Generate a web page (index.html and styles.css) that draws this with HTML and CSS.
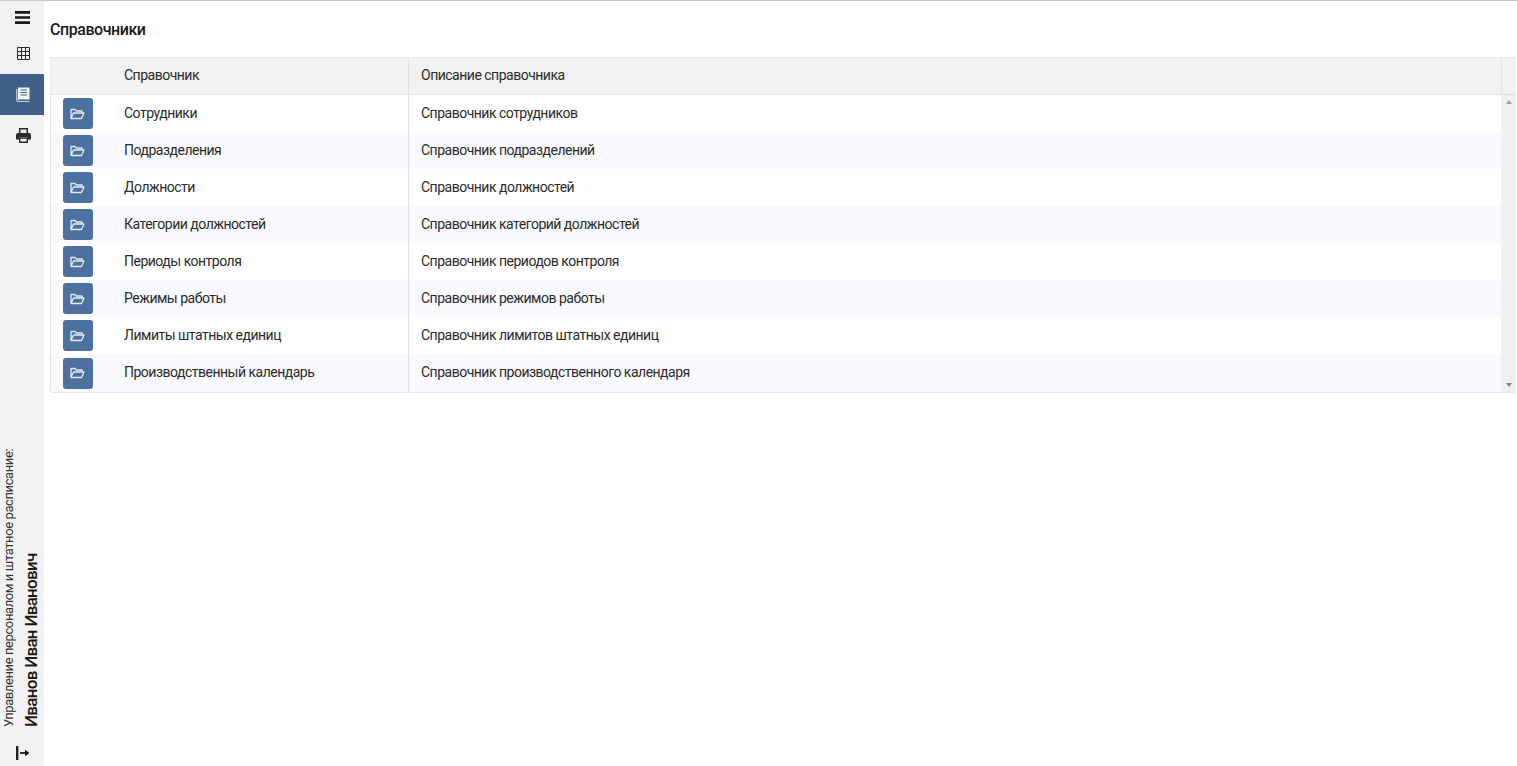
FILE: index.html
```html
<!DOCTYPE html>
<html lang="ru">
<head>
  <meta charset="UTF-8">
  <title>Справочники</title>
  <link rel="stylesheet" href="styles.css">
</head>
<body>
  <aside class="sidebar">
    <nav class="side-nav">
      <a class="side-item side-toggle" href="#">
        <svg class="icon-menu" viewBox="0 0 15 13"><path d="M0 1.350h15M0 6.500h15M0 11.650h15" stroke="currentColor" stroke-width="2.700" fill="none"/></svg>
      </a>
      <a class="side-item" href="#">
        <svg class="icon-table" viewBox="0 0 13 13"><path d="M.5.5h12v12H.5zM.5 4.500h12M.5 8.500h12M4.500.5v12M8.500.5v12" stroke="currentColor" stroke-width="1" fill="none"/></svg>
      </a>
      <a class="side-item active" href="#">
        <svg class="icon-book" viewBox="0 0 14 15"><path d="M2 .5h11.500v12H3.200C2.300 12.500 2 13 2 13.300z" fill="currentColor"/><path d="M.8 2v11c0 1 .6 1.500 1.500 1.500h11.200" stroke="#c4d3e4" stroke-width="1.200" fill="none"/><path d="M4.500 3h6.500M4.500 5.500h6.500M4.500 8h6.500" stroke="#3f6088" stroke-width="1.100"/></svg>
      </a>
      <a class="side-item" href="#">
        <svg class="icon-print" viewBox="0 0 15 15"><path d="M3.700 5V.8h7.600V5" stroke="currentColor" stroke-width="1.500" fill="none"/><path d="M2 5h11a2 2 0 0 1 2 2v4.500h-3V9H3v2.500H0V7a2 2 0 0 1 2-2z" fill="currentColor"/><path d="M3.700 10h7.600v4.300H3.700z" stroke="currentColor" stroke-width="1.400" fill="none"/></svg>
      </a>
    </nav>
    <div class="side-user">
      <span class="app-name">Управление персоналом и штатное расписание:</span>
      <span class="user-name">Иванов Иван Иванович</span>
    </div>
    <a class="side-logout" href="#">
      <svg class="icon-logout" viewBox="0 0 14 14"><path d="M1.200 0v14" stroke="currentColor" stroke-width="2.300"/><path d="M4 7h6" stroke="currentColor" stroke-width="1.800"/><path d="M9 3.800L13.500 7 9 10.200z" fill="currentColor"/></svg>
    </a>
  </aside>

  <main class="content">
    <h1 class="page-title">Справочники</h1>
    <div class="grid">
      <div class="grid-head">
        <div class="cell-action"></div>
        <div class="cell-name">Справочник</div>
        <div class="cell-desc">Описание справочника</div>
        <div class="head-scroll"></div>
      </div>
      <div class="grid-wrap">
        <div class="grid-body">
          <div class="grid-row">
            <div class="cell-action"><button class="open-btn"><svg class="folder" viewBox="0 0 15 12"><path d="M1 10.500V1.500h4l1.300 1.500H12v2M1 10.500h10.500L14 5H3.500z" stroke="currentColor" stroke-width="1.300" fill="none" stroke-linejoin="round"/></svg></button></div>
            <div class="cell-name">Сотрудники</div>
            <div class="cell-desc">Справочник сотрудников</div>
          </div>
          <div class="grid-row">
            <div class="cell-action"><button class="open-btn"><svg class="folder" viewBox="0 0 15 12"><path d="M1 10.500V1.500h4l1.300 1.500H12v2M1 10.500h10.500L14 5H3.500z" stroke="currentColor" stroke-width="1.300" fill="none" stroke-linejoin="round"/></svg></button></div>
            <div class="cell-name">Подразделения</div>
            <div class="cell-desc">Справочник подразделений</div>
          </div>
          <div class="grid-row">
            <div class="cell-action"><button class="open-btn"><svg class="folder" viewBox="0 0 15 12"><path d="M1 10.500V1.500h4l1.300 1.500H12v2M1 10.500h10.500L14 5H3.500z" stroke="currentColor" stroke-width="1.300" fill="none" stroke-linejoin="round"/></svg></button></div>
            <div class="cell-name">Должности</div>
            <div class="cell-desc">Справочник должностей</div>
          </div>
          <div class="grid-row">
            <div class="cell-action"><button class="open-btn"><svg class="folder" viewBox="0 0 15 12"><path d="M1 10.500V1.500h4l1.300 1.500H12v2M1 10.500h10.500L14 5H3.500z" stroke="currentColor" stroke-width="1.300" fill="none" stroke-linejoin="round"/></svg></button></div>
            <div class="cell-name">Категории должностей</div>
            <div class="cell-desc">Справочник категорий должностей</div>
          </div>
          <div class="grid-row">
            <div class="cell-action"><button class="open-btn"><svg class="folder" viewBox="0 0 15 12"><path d="M1 10.500V1.500h4l1.300 1.500H12v2M1 10.500h10.500L14 5H3.500z" stroke="currentColor" stroke-width="1.300" fill="none" stroke-linejoin="round"/></svg></button></div>
            <div class="cell-name">Периоды контроля</div>
            <div class="cell-desc">Справочник периодов контроля</div>
          </div>
          <div class="grid-row">
            <div class="cell-action"><button class="open-btn"><svg class="folder" viewBox="0 0 15 12"><path d="M1 10.500V1.500h4l1.300 1.500H12v2M1 10.500h10.500L14 5H3.500z" stroke="currentColor" stroke-width="1.300" fill="none" stroke-linejoin="round"/></svg></button></div>
            <div class="cell-name">Режимы работы</div>
            <div class="cell-desc">Справочник режимов работы</div>
          </div>
          <div class="grid-row">
            <div class="cell-action"><button class="open-btn"><svg class="folder" viewBox="0 0 15 12"><path d="M1 10.500V1.500h4l1.300 1.500H12v2M1 10.500h10.500L14 5H3.500z" stroke="currentColor" stroke-width="1.300" fill="none" stroke-linejoin="round"/></svg></button></div>
            <div class="cell-name">Лимиты штатных единиц</div>
            <div class="cell-desc">Справочник лимитов штатных единиц</div>
          </div>
          <div class="grid-row">
            <div class="cell-action"><button class="open-btn"><svg class="folder" viewBox="0 0 15 12"><path d="M1 10.500V1.500h4l1.300 1.500H12v2M1 10.500h10.500L14 5H3.500z" stroke="currentColor" stroke-width="1.300" fill="none" stroke-linejoin="round"/></svg></button></div>
            <div class="cell-name">Производственный календарь</div>
            <div class="cell-desc">Справочник производственного календаря</div>
          </div>
        </div>
        <div class="scroll-track">
          <span class="arrow-up"></span>
          <span class="arrow-down"></span>
        </div>
      </div>
    </div>
  </main>
</body>
</html>
```

FILE: styles.css
```css
* {
  margin: 0;
  padding: 0;
  box-sizing: border-box;
}

html, body {
  height: 100%;
  overflow: hidden;
}

body {
  font-family: Roboto, "Liberation Sans", sans-serif;
  font-size: 14px;
  letter-spacing: -0.5px;
  color: #2b2b2b;
  background-color: #ffffff;
  border-top: 1px solid #c8c8c8;
  display: flex;
}

.sidebar {
  width: 44px;
  flex-shrink: 0;
  background-color: #f2f2f2;
  display: flex;
  flex-direction: column;
}

.side-nav {
  display: flex;
  flex-direction: column;
}

.side-item {
  height: 41px;
  display: flex;
  align-items: center;
  justify-content: center;
  color: #2b2b2b;
  padding-left: 2px;
  padding-bottom: 1px;
}

.side-toggle {
  height: 32px;
  color: #1a1a1a;
  padding-left: 1px;
  padding-bottom: 0;
}

.side-item.active {
  background-color: #3f6088;
  color: #f2f5f8;
}

.icon-menu {
  width: 15px;
  height: 13px;
}

.icon-table {
  width: 13px;
  height: 13px;
}

.icon-book {
  width: 14px;
  height: 15px;
}

.icon-print {
  width: 15px;
  height: 15px;
}

/* подпись снизу вверх */
.side-user {
  flex: 1;
  display: flex;
  flex-direction: column;
  justify-content: flex-start;
  align-items: flex-start;
  writing-mode: vertical-rl;
  transform: rotate(180deg);
  padding-top: 11px;
}

.app-name {
  font-size: 13px;
  letter-spacing: -0.4px;
  color: #333333;
  width: 18px;
  line-height: 18px;
}

.user-name {
  font-size: 17px;
  font-weight: 500;
  letter-spacing: -0.7px;
  color: #1a1a1a;
  line-height: 26px;
}

.side-logout {
  height: 28px;
  padding: 8px 0 0 2px;
  display: flex;
  justify-content: center;
  align-items: flex-start;
  color: #1a1a1a;
}

.icon-logout {
  width: 14px;
  height: 14px;
}

.content {
  flex: 1;
  min-width: 0;
  padding: 0 1px 0 6px;
}

.page-title {
  font-size: 16px;
  font-weight: 500;
  letter-spacing: -0.45px;
  line-height: 20px;
  padding-top: 19px;
  height: 56px;
  color: #1a1a1a;
}

.grid {
  border: 1px solid #e6e6e6;
  border-width: 1px 0 1px 1px;
  border-bottom-left-radius: 3px;
}

.grid-head {
  display: flex;
  height: 37px;
  background-color: #f2f2f2;
  border-bottom: 1px solid #e2e2e2;
}

.grid-head .cell-name,
.grid-head .cell-desc,
.grid-row .cell-name,
.grid-row .cell-desc {
  display: flex;
  align-items: center;
  padding-bottom: 2px;
}

.cell-action {
  width: 61px;
  flex-shrink: 0;
  display: flex;
  align-items: center;
  padding-left: 12px;
}

.cell-name {
  width: 297px;
  flex-shrink: 0;
  padding-left: 12px;
  border-right: 1px solid #e2e2e2;
}

.cell-desc {
  flex: 1;
  padding-left: 12px;
}

.head-scroll {
  width: 15px;
  border-left: 1px solid #e2e2e2;
}

.grid-wrap {
  display: flex;
}

.grid-body {
  flex: 1;
  min-width: 0;
}

.grid-row {
  display: flex;
  height: 37px;
  align-items: stretch;
}

.grid-row:nth-child(even) {
  background-color: #f8fafd;
}

.grid-row:last-child {
  height: 38px;
}

.grid-row:last-child .cell-name,
.grid-row:last-child .cell-desc {
  padding-bottom: 3px;
}

.open-btn {
  width: 30px;
  height: 31px;
  border: none;
  border-radius: 3px;
  background-color: #4a719f;
  color: #e3ebf3;
  display: flex;
  align-items: center;
  justify-content: center;
  padding-right: 2px;
}

.folder {
  width: 15px;
  height: 12px;
}

.scroll-track {
  width: 15px;
  flex-shrink: 0;
  background-color: #f0f0f0;
  display: flex;
  flex-direction: column;
  justify-content: space-between;
  align-items: center;
  padding: 5px 0;
}

.arrow-up {
  border: 3px solid transparent;
  border-top: 0;
  border-bottom: 4px solid #a0a0a0;
}

.arrow-down {
  border: 3px solid transparent;
  border-bottom: 0;
  border-top: 4px solid #808080;
}
```
